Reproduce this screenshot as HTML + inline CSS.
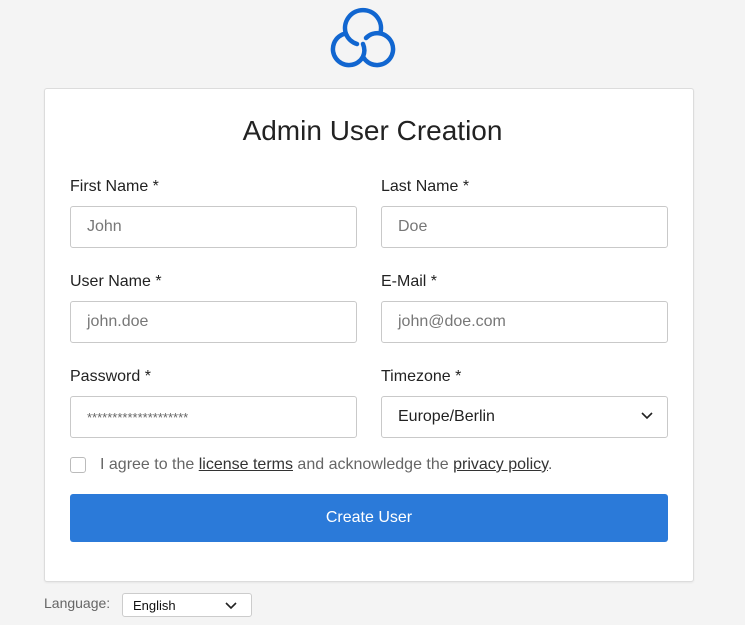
<!DOCTYPE html>
<html><head><meta charset="utf-8"><style>
*{box-sizing:border-box}
body{margin:0;width:745px;height:625px;background:#f4f4f4;font-family:"Liberation Sans",sans-serif;position:relative;overflow:hidden}
.card{position:absolute;left:44px;top:88px;width:650px;height:494px;background:#fff;border:1px solid #dcdcdc;border-radius:3px;box-shadow:0 1px 2px rgba(0,0,0,.06)}
h1{position:absolute;left:0;right:0;top:115px;margin:0;text-align:center;font-weight:400;font-size:28px;color:#222}
.lbl{position:absolute;font-size:16px;color:#222}
.in{position:absolute;width:287px;height:42px;border:1px solid #c9c9c9;border-radius:3px;background:#fff;font-size:16px;color:#777;padding:11px 16px}
.btn{position:absolute;left:70px;top:494px;width:598px;height:48px;background:#2b7ad9;border-radius:3px;color:#fff;font-size:16px;text-align:center;line-height:48px}
.cb{position:absolute;left:70px;top:457px;width:16px;height:16px;border:1px solid #bbb;border-radius:3px;background:#fff}
.agree{position:absolute;left:100px;top:456px;font-size:16px;color:#666}
.agree u{color:#333}
</style></head><body>
<svg style="position:absolute;left:0;top:0" width="745" height="80">
<g fill="none" stroke="#1166d0" stroke-width="4.5" stroke-linecap="round">
<path d="M345.8 33.4 A18 18 0 1 1 380.2 33.4 A16 16 0 1 1 363 56.7 A16 16 0 1 1 345.8 33.4"/>
<path d="M345.8 33.4 A18 18 0 0 0 357 44"/>
<path d="M380.2 33.4 A16 16 0 0 0 366 38"/>
<path d="M363 56.7 A16 16 0 0 0 363 44"/>
</g></svg>
<div class="card"></div>
<h1>Admin User Creation</h1>
<div class="lbl" style="left:70px;top:178px">First Name *</div>
<div class="lbl" style="left:381px;top:178px">Last Name *</div>
<div class="in" style="left:70px;top:206px">John</div>
<div class="in" style="left:381px;top:206px">Doe</div>
<div class="lbl" style="left:70px;top:273px">User Name *</div>
<div class="lbl" style="left:381px;top:273px">E-Mail *</div>
<div class="in" style="left:70px;top:301px">john.doe</div>
<div class="in" style="left:381px;top:301px">john@doe.com</div>
<div class="lbl" style="left:70px;top:368px">Password *</div>
<div class="lbl" style="left:381px;top:368px">Timezone *</div>
<div class="in" style="left:70px;top:396px;font-size:13px;padding-top:13px;color:#666">********************</div>
<div class="in" style="left:381px;top:396px;color:#222">Europe/Berlin
<svg style="position:absolute;right:14px;top:15px" width="12" height="8"><path d="M1 1 L6 6 L11 1" fill="none" stroke="#222" stroke-width="1.6"/></svg></div>
<div class="cb"></div>
<div class="agree">I agree to the <u>license terms</u> and acknowledge the <u>privacy policy</u>.</div>
<div class="btn">Create User</div>
<div style="position:absolute;left:44px;top:595px;font-size:14px;color:#666">Language:</div>
<div style="position:absolute;left:122px;top:593px;width:130px;height:24px;border:1px solid #ccc;border-radius:3px;background:#fff;font-size:13px;color:#111;padding:4px 10px">English
<svg style="position:absolute;right:14px;top:8px" width="12" height="8"><path d="M1 1 L6 6 L11 1" fill="none" stroke="#222" stroke-width="1.6"/></svg></div>
</body></html>
